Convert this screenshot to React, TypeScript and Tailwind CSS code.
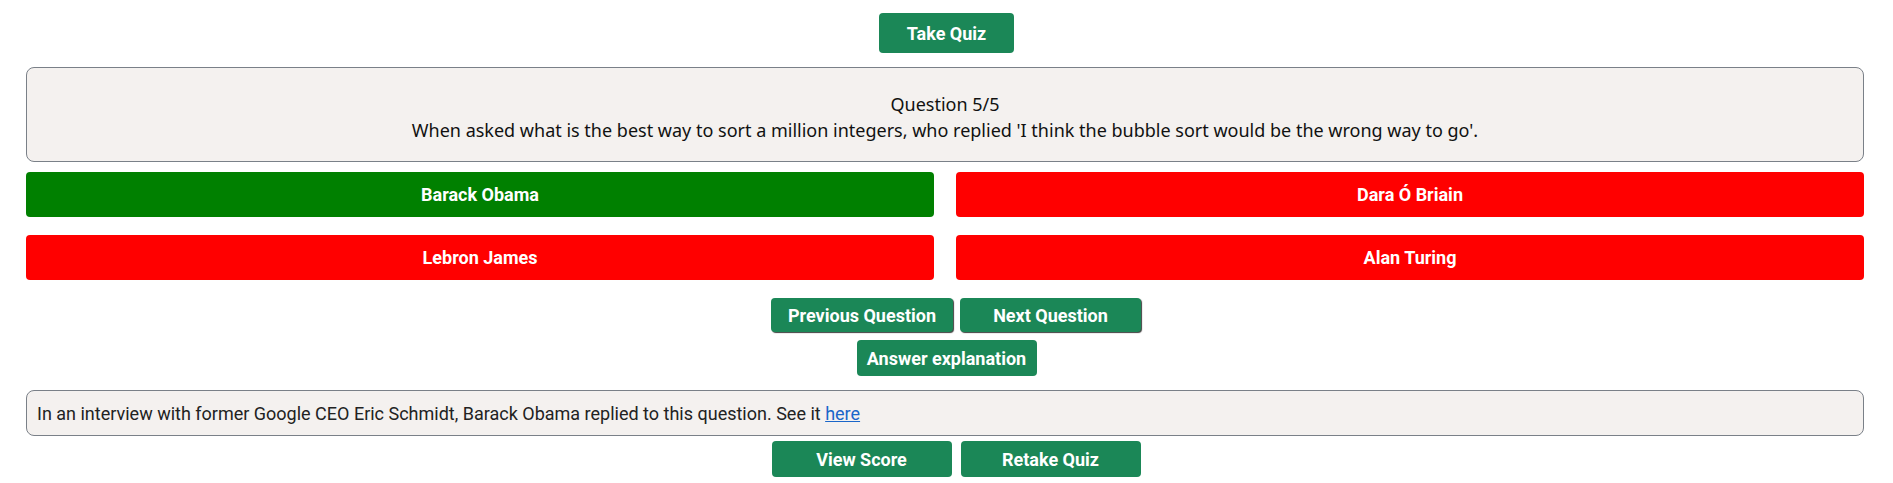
import React from 'react';

const greenBtn =
  'bg-[#1b8757] text-white font-bold text-[18px] rounded-[4px] flex items-center justify-center';

export default function App() {
  return (
    <main className="w-full bg-white pt-[13px] font-['Roboto',sans-serif]">
      {/* Start */}
      <div className="flex justify-center">
        <button className={`${greenBtn} w-[135px] h-[40px]`}>Take Quiz</button>
      </div>

      {/* Question */}
      <div className="ml-[26px] mr-[29px] mt-[14px] h-[95px] rounded-[8px] border border-[#7a8088] bg-[#f4f1ef] pt-[23px] text-center text-[18px] leading-[26px] text-[#111] font-['Noto_Sans',sans-serif]">
        <p>Question 5/5</p>
        <p>
          When asked what is the best way to sort a million integers, who replied 'I think the bubble sort
          would be the wrong way to go'.
        </p>
      </div>

      {/* Answers */}
      <div className="ml-[26px] mr-[29px] mt-[10px] grid grid-cols-2 gap-x-[22px] gap-y-[18px]">
        <button className="h-[45px] rounded-[4px] bg-[#008000] text-white font-bold text-[18px]">Barack Obama</button>
        <button className="h-[45px] rounded-[4px] bg-[#ff0000] text-white font-bold text-[18px]">Dara Ó Briain</button>
        <button className="h-[45px] rounded-[4px] bg-[#ff0000] text-white font-bold text-[18px]">Lebron James</button>
        <button className="h-[45px] rounded-[4px] bg-[#ff0000] text-white font-bold text-[18px]">Alan Turing</button>
      </div>

      {/* Navigation */}
      <div className="mt-[18px] flex justify-center gap-[7px] pl-[19px]">
        <button className={`${greenBtn} w-[182px] h-[34px] shadow-[1px_1px_1px_rgba(0,0,0,0.75)]`}>
          Previous Question
        </button>
        <button className={`${greenBtn} w-[181px] h-[34px] shadow-[1px_1px_1px_rgba(0,0,0,0.75)]`}>
          Next Question
        </button>
      </div>
      <div className="mt-[8px] flex justify-center">
        <button className={`${greenBtn} w-[180px] h-[36px]`}>Answer explanation</button>
      </div>

      {/* Explanation */}
      <div className="ml-[26px] mr-[29px] mt-[14px] h-[46px] rounded-[8px] border border-[#7a8088] bg-[#f4f1ef] px-[10px] flex items-center text-[18px] text-[#222]">
        <span>
          In an interview with former Google CEO Eric Schmidt, Barack Obama replied to this question. See it{' '}
          <a href="#" className="text-[#1a66c9] underline">
            here
          </a>
        </span>
      </div>

      {/* Score */}
      <div className="mt-[5px] flex justify-center gap-[9px] pl-[19px]">
        <button className={`${greenBtn} w-[180px] h-[36px]`}>View Score</button>
        <button className={`${greenBtn} w-[180px] h-[36px]`}>Retake Quiz</button>
      </div>
    </main>
  );
}
